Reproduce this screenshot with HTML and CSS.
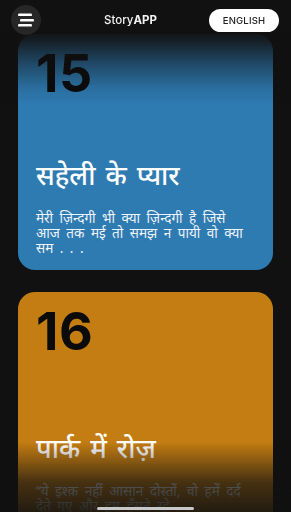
FILE: index.html
```html
<!DOCTYPE html>
<html lang="hi">
<head>
    <meta charset="UTF-8">
    <title>StoryAPP</title>
    <link rel="stylesheet" href="styles.css">
</head>
<body>
    <header class="topbar">
        <button class="menu-btn" aria-label="Menu">
            <svg width="16" height="14" viewBox="0 0 16 14">
                <rect x="0" y="0.5" width="14" height="2.6" rx="1.2" fill="#fff"/>
                <rect x="2" y="6" width="14" height="2.6" rx="1.2" fill="#fff"/>
                <rect x="0" y="11" width="14" height="2.6" rx="1.2" fill="#fff"/>
            </svg>
        </button>
        <div class="app-title">Story<b>APP</b></div>
        <button class="lang-btn">ENGLISH</button>
    </header>

    <main class="feed">
        <article class="story-card blue">
            <div class="story-num">15</div>
            <div class="story-body">
                <h2 class="story-title">सहेली के प्यार</h2>
                <p class="story-text">मेरी ज़िन्दगी भी क्या ज़िन्दगी है जिसे आज तक मई तो समझ न पायी वो क्या सम . . .</p>
            </div>
        </article>

        <article class="story-card orange">
            <div class="story-num">16</div>
            <div class="story-body">
                <h2 class="story-title">पार्क में रोज़</h2>
                <p class="story-text">“ये इश्क़ नहीं आसान दोस्तों,  वो हमें दर्द देते गए और हम हँसते रहे . . .</p>
            </div>
        </article>
    </main>

    <div class="bottom-fade"></div>
    <div class="home-bar"></div>
</body>
</html>
```

FILE: styles.css
```css
body {
    margin: 0;
    background: #111111;
    font-family: 'Noto Sans', sans-serif;
    color: #fff;
    overflow: hidden;
    height: 512px;
}
.topbar {
    position: fixed;
    top: 0;
    left: 0;
    right: 0;
    height: 104px;
    display: flex;
    align-items: flex-start;
    padding: 5px 12px 0 11px;
    box-sizing: border-box;
    background: linear-gradient(to bottom, #111111 0, #111111 30px, rgba(17,17,17,0.88) 40px, rgba(17,17,17,0.45) 65px, rgba(17,17,17,0.12) 88px, rgba(17,17,17,0) 104px);
    z-index: 2;
}
.menu-btn {
    width: 30px;
    height: 30px;
    border-radius: 50%;
    border: none;
    background: #272727;
    padding: 0;
    display: flex;
    align-items: center;
    justify-content: center;
}
.app-title {
    margin-left: 63px;
    font-family: 'Inter', sans-serif;
    font-size: 11.5px;
    font-weight: 500;
    line-height: 31px;
    color: #f2f2f2;
}
.app-title b {
    font-weight: 700;
}
.lang-btn {
    margin: 4px 0 0 auto;
    height: 23px;
    width: 70px;
    border: none;
    border-radius: 12px;
    background: #fff;
    color: #222;
    font-family: 'Inter', sans-serif;
    font-size: 9.5px;
    font-weight: 500;
    letter-spacing: 0.2px;
    padding: 0;
}
.feed {
    display: flex;
    flex-direction: column;
    gap: 22px;
    padding: 34px 18px 0 18px;
}
.story-card {
    height: 236px;
    border-radius: 17px;
    padding: 15px 18px 14px 18px;
    box-sizing: border-box;
    display: flex;
    flex-direction: column;
    flex-shrink: 0;
}
.blue {
    background: #2e7bb2;
}
.orange {
    background: #c47d12;
}
.story-num {
    font-family: 'Inter', sans-serif;
    font-size: 52px;
    font-weight: 700;
    line-height: 50px;
    letter-spacing: 0.5px;
    color: #0b0b0b;
}
.story-body {
    margin-top: auto;
}
.story-title {
    margin: 0 0 21px 0;
    font-size: 27px;
    font-weight: 500;
    line-height: 30px;
    word-spacing: 3px;
    color: #fff;
}
.story-text {
    margin: 0;
    max-width: 212px;
    font-size: 13.5px;
    line-height: 15px;
    word-spacing: 3px;
    color: #eef3f8;
}
.bottom-fade {
    position: fixed;
    left: 0;
    right: 0;
    bottom: 0;
    height: 70px;
    background: linear-gradient(to bottom, rgba(17,17,17,0) 0, rgba(17,17,17,0.7) 40px, rgba(17,17,17,0.9) 70px);
    z-index: 1;
}
.home-bar {
    position: fixed;
    left: 97px;
    bottom: 2px;
    width: 97px;
    height: 3px;
    border-radius: 2px;
    background: #c8c8c8;
    z-index: 3;
}
```
